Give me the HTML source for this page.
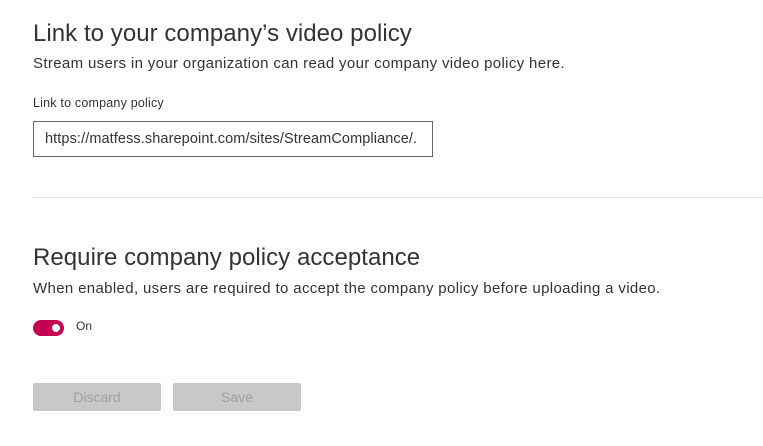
<!DOCTYPE html>
<html><head><style>
body{margin:0;width:763px;height:446px;background:#fff;font-family:"Liberation Sans",sans-serif;color:#333;position:relative;overflow:hidden}
.a{position:absolute;white-space:nowrap}
.h{font-size:24px;color:#333;letter-spacing:0.05px}
.p{font-size:15px;color:#333;letter-spacing:0.35px}
.btn{position:absolute;top:383px;width:128px;height:28px;background:#c8c8c8;border-radius:2px;color:#a0a0a0;font-size:14px;text-align:center;line-height:28px}
</style></head><body>
<div class="a h" style="left:33px;top:20px">Link to your company’s video policy</div>
<div class="a p" style="left:33px;top:55px">Stream users in your organization can read your company video policy here.</div>
<div class="a" style="left:33px;top:96px;font-size:12.5px;letter-spacing:0.2px">Link to company policy</div>
<div class="a" style="left:33px;top:121px;width:398px;height:34px;border:1px solid #666;overflow:hidden">
<div style="padding-left:11px;line-height:35px;font-size:14.5px;letter-spacing:0.1px">https://matfess.sharepoint.com/sites/StreamCompliance/.</div></div>
<div class="a" style="left:33px;top:197px;width:730px;height:1px;background:#ddd"></div>
<div class="a h" style="left:33px;top:244px">Require company policy acceptance</div>
<div class="a p" style="left:33px;top:280px">When enabled, users are required to accept the company policy before uploading a video.</div>
<div class="a" style="left:33px;top:320px;width:31px;height:16px;border-radius:8px;background:#c30052"></div>
<div class="a" style="left:52px;top:324px;width:8px;height:8px;border-radius:50%;background:#fff"></div>
<div class="a" style="left:76px;top:319px;font-size:12px">On</div>
<div class="btn" style="left:33px">Discard</div>
<div class="btn" style="left:173px">Save</div>
</body></html>
